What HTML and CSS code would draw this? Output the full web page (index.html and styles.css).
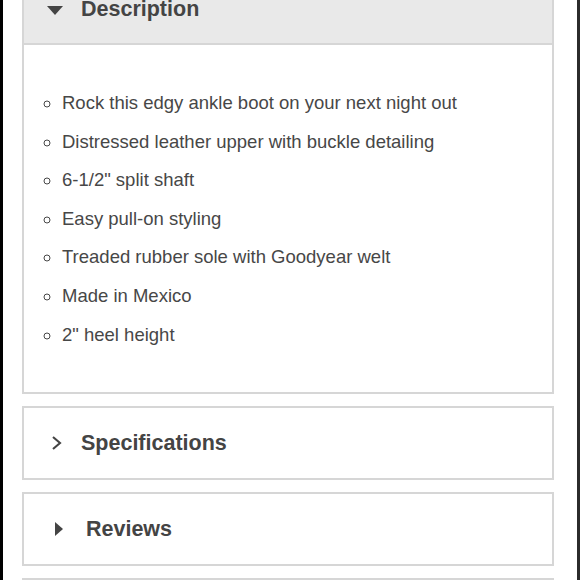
FILE: index.html
```html
<!DOCTYPE html>
<html lang="en">
<head>
    <meta charset="UTF-8">
    <meta name="viewport" content="width=device-width, initial-scale=1.0">
    <title>Product Details</title>
    <link rel="stylesheet" href="styles.css">
</head>
<body>
    <div class="frame">
        <div class="panel open">
            <div class="panel-header">
                <!-- caret down -->
                <svg class="icon icon-caret-down" width="34" height="12" viewBox="0 0 34 12">
                    <polygon points="0,3 16,3 8,12" fill="#444"/>
                </svg>
                <h2>Description</h2>
            </div>
            <div class="panel-body">
                <ul class="features">
                    <li>Rock this edgy ankle boot on your next night out</li>
                    <li>Distressed leather upper with buckle detailing</li>
                    <li>6-1/2" split shaft</li>
                    <li>Easy pull-on styling</li>
                    <li>Treaded rubber sole with Goodyear welt</li>
                    <li>Made in Mexico</li>
                    <li>2" heel height</li>
                </ul>
            </div>
        </div>

        <div class="panel">
            <div class="panel-header">
                <!-- chevron right -->
                <svg class="icon" width="34" height="16" viewBox="0 0 34 16">
                    <polyline points="6,2 13,8 6,14" fill="none" stroke="#444" stroke-width="2.1"/>
                </svg>
                <h2>Specifications</h2>
            </div>
        </div>

        <div class="panel">
            <div class="panel-header">
                <!-- caret right -->
                <svg class="icon" width="39" height="16" viewBox="0 0 39 16">
                    <polygon points="8,1 16,8 8,15" fill="#444"/>
                </svg>
                <h2>Reviews</h2>
            </div>
        </div>

        <div class="panel">
            <div class="panel-header">
                <h2>&nbsp;</h2>
            </div>
        </div>
    </div>
</body>
</html>
```

FILE: styles.css
```css
body {
    margin: 0;
    background: #fff;
    font-family: 'Liberation Sans', Arial, Helvetica, sans-serif;
    color: #444;
    overflow: hidden;
}

.frame {
    height: 580px;
    border-left: 3px solid #000;
    border-right: 3px solid #2b2b2b;
    padding: 0 23px 0 19px;
    box-sizing: border-box;
    overflow: hidden;
}

.panel {
    border: 2px solid #d6d6d6;
    margin-bottom: 12px;
    background: #fff;
}

.panel:first-child {
    margin-top: -27px;
}

.panel-header {
    height: 70px;
    display: flex;
    align-items: center;
    padding-left: 23px;
}

.open .panel-header {
    height: 68px;
    background: #e9e9e9;
    border-bottom: 2px solid #d6d6d6;
}

.panel-header h2 {
    margin: 0;
    font-size: 21.5px;
    font-weight: bold;
    color: #444;
}

.icon {
    flex: none;
    display: block;
}

.panel-body {
    padding: 39px 0 38px;
}

.features {
    list-style: circle;
    margin: 0;
    padding-left: 38px;
    font-size: 18.5px;
    color: #474747;
}

.features li {
    line-height: 38.6px;
}
```
